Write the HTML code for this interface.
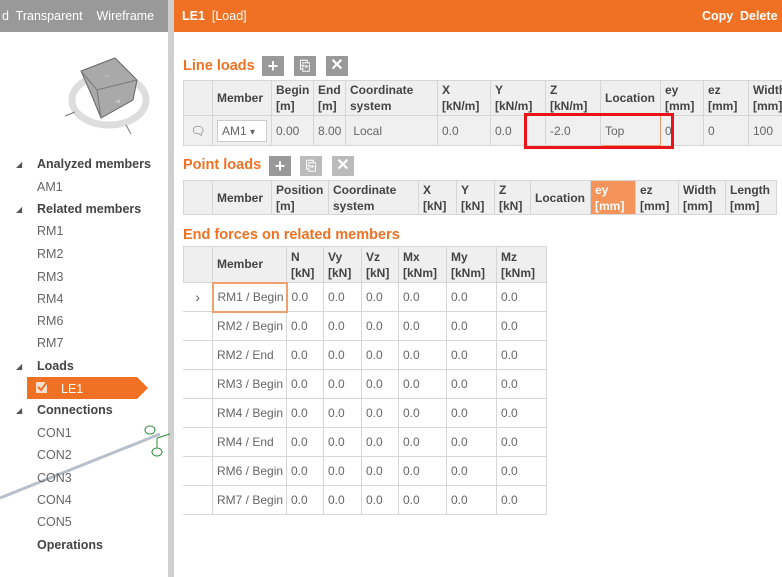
<!DOCTYPE html>
<html><head><meta charset="utf-8"><style>
*{margin:0;padding:0;box-sizing:border-box}
body{width:782px;height:577px;overflow:hidden;background:#fff;font-family:"Liberation Sans",sans-serif;font-size:12px;color:#666;position:relative}
.a{position:absolute}
.tb{background:#999;left:0;top:0;width:168px;height:32px;color:#fff;font-size:12.5px}
.sep{left:168px;top:0;width:6px;height:577px;background:#cfcfcf}
.hdr{left:174px;top:0;width:608px;height:32px;background:#f07124;color:#fff;font-size:12.5px}
.tree div{position:absolute;font-size:12.5px;color:#666}
.tree b{color:#444}
.arr{position:absolute;left:16px;font-size:8px;color:#555}
h3{position:absolute;color:#f07124;font-size:14.5px;font-weight:bold;left:183px}
.btn{position:absolute;width:22px;height:20px;background:#999;color:#fff;font-size:18px;font-weight:bold;text-align:center;line-height:20px}
table{position:absolute;border-collapse:collapse;table-layout:fixed}
td,th{border:1px solid #d6d6d6;padding:0 4px;text-align:left;font-size:12px;white-space:nowrap;overflow:hidden}
td{color:#666}
th{background:#efefef;color:#444;font-weight:bold;line-height:16px;vertical-align:middle}
.g td{background:#f0f0f0}
</style></head><body>
<div class="a tb"><span class="a" style="left:2px;top:9px">d&nbsp; Transparent &nbsp;&nbsp; Wireframe</span></div>
<div class="a sep"></div>
<div class="a hdr"><span class="a" style="left:8px;top:9px"><b>LE1</b> &nbsp;[Load]</span><b class="a" style="left:528px;top:9px">Copy</b><b class="a" style="left:566px;top:9px">Delete</b></div>
<svg class="a" style="left:0;top:0" width="168" height="140">
<ellipse cx="109" cy="100" rx="37" ry="25" fill="none" stroke="#ddd" stroke-width="7"/>
<polygon points="81,71 115,58 137,80 133,100 101,118 92,96" fill="#a9a9a9" stroke="#666"/>
<polyline points="81,71 97,90 137,80" fill="none" stroke="#777"/>
<polyline points="97,90 101,118" fill="none" stroke="#777"/>
<line x1="65" y1="116" x2="75" y2="112" stroke="#777"/><line x1="126" y1="125" x2="131" y2="134" stroke="#777"/>
<text x="104" y="77" font-size="6" fill="#eee">↔</text><text x="115" y="103" font-size="6" fill="#eee">-x</text>
</svg>
<svg class="a" style="left:0;top:420px" width="172" height="80"><line x1="0" y1="78" x2="160" y2="14" stroke="#b8c0cc" stroke-width="3"/><ellipse cx="150" cy="10" rx="5" ry="4" fill="none" stroke="#2a8a3a"/><ellipse cx="157" cy="32" rx="5" ry="4" fill="none" stroke="#2a8a3a"/><line x1="157" y1="18" x2="157" y2="28" stroke="#2a8a3a"/><line x1="157" y1="18" x2="170" y2="14" stroke="#2a8a3a"/></svg>
<div class="tree">
<span class="arr" style="top:160px">◢</span><div style="left:37px;top:157px"><b>Analyzed members</b></div>
<div style="left:37px;top:180px">AM1</div>
<span class="arr" style="top:205px">◢</span><div style="left:37px;top:202px"><b>Related members</b></div>
<div style="left:37px;top:224px">RM1</div><div style="left:37px;top:247px">RM2</div><div style="left:37px;top:270px">RM3</div><div style="left:37px;top:292px">RM4</div><div style="left:37px;top:314px">RM6</div><div style="left:37px;top:336px">RM7</div>
<span class="arr" style="top:362px">◢</span><div style="left:37px;top:359px"><b>Loads</b></div>
<svg class="a" style="left:27px;top:377px" width="122" height="22"><polygon points="0,0 110,0 121,11 110,22 0,22" fill="#f07124"/><rect x="9" y="5" width="11" height="11" fill="#fbe0cc"/><path d="M11 10 l3 3 l6-8" stroke="#f07124" stroke-width="2" fill="none"/><text x="34" y="16" fill="#fff" font-size="12.5" font-family="Liberation Sans">LE1</text></svg>
<span class="arr" style="top:406px">◢</span><div style="left:37px;top:403px"><b>Connections</b></div>
<div style="left:37px;top:426px">CON1</div><div style="left:37px;top:448px">CON2</div><div style="left:37px;top:471px">CON3</div><div style="left:37px;top:493px">CON4</div><div style="left:37px;top:515px">CON5</div>
<div style="left:37px;top:538px"><b>Operations</b></div>
</div>

<h3 style="top:58px">Line loads</h3>
<div class="btn" style="left:262px;top:56px">+</div><div class="btn" style="left:294px;top:56px;font-size:13px">⎘</div><div class="btn" style="left:326px;top:56px;font-size:16px">✕</div>
<table style="left:183px;top:80px;width:610px">
<colgroup><col style="width:29px"><col style="width:59px"><col style="width:42px"><col style="width:32px"><col style="width:92px"><col style="width:53px"><col style="width:55px"><col style="width:55px"><col style="width:60px"><col style="width:43px"><col style="width:45px"><col style="width:45px"></colgroup>
<tr style="height:35px"><th></th><th>Member</th><th>Begin<br>[m]</th><th>End<br>[m]</th><th>Coordinate<br>system</th><th>X<br>[kN/m]</th><th>Y<br>[kN/m]</th><th>Z<br>[kN/m]</th><th>Location</th><th>ey<br>[mm]</th><th>ez<br>[mm]</th><th>Width<br>[mm]</th></tr>
<tr class="g" style="height:30px"><td style="text-align:center">🗨</td><td><span style="display:inline-block;background:#fff;border:1px solid #ccc;padding:3px 4px;width:50px">AM1 <small>▾</small></span></td><td>0.00</td><td>8.00</td><td>&nbsp;Local</td><td>0.0</td><td>0.0</td><td>-2.0</td><td style="border:1px solid #e8a070">Top</td><td>0</td><td>0</td><td>100</td></tr>
</table>
<div class="a" style="left:524px;top:113px;width:150px;height:36px;border:3px solid #e8141a"></div>

<h3 style="top:157px">Point loads</h3>
<div class="btn" style="left:269px;top:156px">+</div><div class="btn" style="left:300px;top:156px;background:#bbb;font-size:13px">⎘</div><div class="btn" style="left:332px;top:156px;background:#bbb;font-size:16px">✕</div>
<table style="left:183px;top:180px;width:593px">
<colgroup><col style="width:29px"><col style="width:59px"><col style="width:57px"><col style="width:90px"><col style="width:38px"><col style="width:38px"><col style="width:36px"><col style="width:60px"><col style="width:45px"><col style="width:43px"><col style="width:47px"><col style="width:51px"></colgroup>
<tr style="height:34px"><th></th><th>Member</th><th>Position<br>[m]</th><th>Coordinate<br>system</th><th>X<br>[kN]</th><th>Y<br>[kN]</th><th>Z<br>[kN]</th><th>Location</th><th style="background:#f4935a;color:#fff">ey<br>[mm]</th><th>ez<br>[mm]</th><th>Width<br>[mm]</th><th>Length<br>[mm]</th></tr>
</table>

<h3 style="top:227px">End forces on related members</h3>
<table style="left:183px;top:246px;width:363px">
<colgroup><col style="width:29px"><col style="width:74px"><col style="width:37px"><col style="width:38px"><col style="width:37px"><col style="width:48px"><col style="width:50px"><col style="width:50px"></colgroup>
<tr style="height:36px"><th></th><th>Member</th><th>N<br>[kN]</th><th>Vy<br>[kN]</th><th>Vz<br>[kN]</th><th>Mx<br>[kNm]</th><th>My<br>[kNm]</th><th>Mz<br>[kNm]</th></tr>
<tr style="height:29px"><td style="text-align:center;font-size:14px;border-left-color:#fff">›</td><td style="border:2px solid #f0a070">RM1 / Begin</td><td>0.0</td><td>0.0</td><td>0.0</td><td>0.0</td><td>0.0</td><td>0.0</td></tr>
<tr style="height:29px"><td style="border-left-color:#fff"></td><td>RM2 / Begin</td><td>0.0</td><td>0.0</td><td>0.0</td><td>0.0</td><td>0.0</td><td>0.0</td></tr>
<tr style="height:29px"><td style="border-left-color:#fff"></td><td>RM2 / End</td><td>0.0</td><td>0.0</td><td>0.0</td><td>0.0</td><td>0.0</td><td>0.0</td></tr>
<tr style="height:29px"><td style="border-left-color:#fff"></td><td>RM3 / Begin</td><td>0.0</td><td>0.0</td><td>0.0</td><td>0.0</td><td>0.0</td><td>0.0</td></tr>
<tr style="height:29px"><td style="border-left-color:#fff"></td><td>RM4 / Begin</td><td>0.0</td><td>0.0</td><td>0.0</td><td>0.0</td><td>0.0</td><td>0.0</td></tr>
<tr style="height:29px"><td style="border-left-color:#fff"></td><td>RM4 / End</td><td>0.0</td><td>0.0</td><td>0.0</td><td>0.0</td><td>0.0</td><td>0.0</td></tr>
<tr style="height:29px"><td style="border-left-color:#fff"></td><td>RM6 / Begin</td><td>0.0</td><td>0.0</td><td>0.0</td><td>0.0</td><td>0.0</td><td>0.0</td></tr>
<tr style="height:29px"><td style="border-left-color:#fff"></td><td>RM7 / Begin</td><td>0.0</td><td>0.0</td><td>0.0</td><td>0.0</td><td>0.0</td><td>0.0</td></tr>
</table>
</body></html>
